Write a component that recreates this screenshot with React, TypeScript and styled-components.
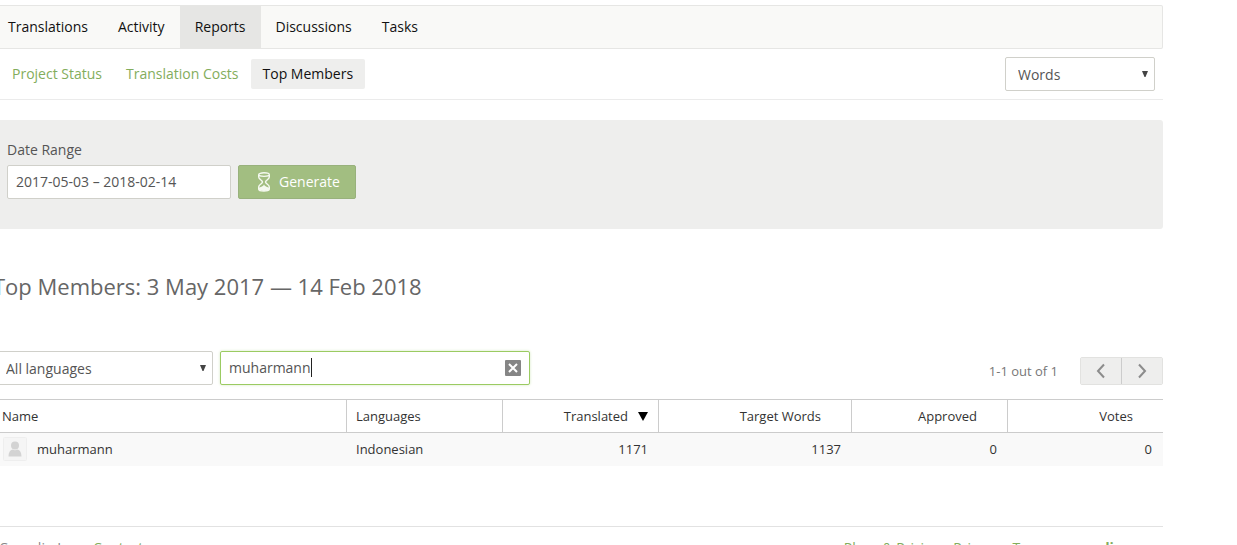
import styled, { createGlobalStyle } from "styled-components";

const GlobalStyle = createGlobalStyle`
  *, *::before, *::after { box-sizing: border-box; }
  body {
    margin: 0;
    background: #fff;
    color: #333;
    font: 14px/20px "Open Sans", sans-serif;
  }
  button, input, select { font: inherit; color: inherit; }
`;

const Page = styled.div`
  height: 100vh;
  overflow: hidden;
  padding: 5px 74px 0 0;
`;

const Content = styled.div`
  margin-left: -7px;
`;

const MainNav = styled.nav`
  display: flex;
  height: 44px;
  background: #f9f9f7;
  border: 1px solid #e6e6e4;
  border-left: 0;
  border-radius: 2px;
`;

const NavLink = styled.a<{ $active?: boolean }>`
  padding: 11px 15px;
  color: #111;
  text-decoration: none;
  background: ${(p) => (p.$active ? "#e6e6e4" : "transparent")};
`;

const SubBar = styled.div`
  display: flex;
  align-items: center;
  justify-content: space-between;
  height: 51px;
  padding: 0 8px 0 7px;
  border-bottom: 1px solid #ebebeb;
`;

const SubNav = styled.nav`
  display: flex;
`;

const SubLink = styled.a<{ $active?: boolean }>`
  padding: 5px 12px;
  border-radius: 2px;
  text-decoration: none;
  color: ${(p) => (p.$active ? "#111" : "#83ad5c")};
  background: ${(p) => (p.$active ? "#eeeeed" : "transparent")};
`;

const SelectBox = styled.div<{ $width: number }>`
  position: relative;
  width: ${(p) => p.$width}px;
  height: 34px;
`;

const Select = styled.select`
  appearance: none;
  width: 100%;
  height: 100%;
  padding: 2px 24px 0 12px;
  color: #555;
  background: #fff;
  border: 1px solid #d0d0ca;
  border-radius: 2px;
`;

const SelectArrow = styled.svg`
  position: absolute;
  right: 7px;
  top: 14px;
  pointer-events: none;
`;

const FilterPanel = styled.form`
  margin-top: 20px;
  padding: 20px 14px 30px;
  background: #eeeeed;
  border-radius: 3px;
`;

const Label = styled.label`
  display: block;
  margin-bottom: 5px;
  color: #555;
`;

const FieldRow = styled.div`
  display: flex;
  gap: 7px;
`;

const TextInput = styled.input`
  width: 224px;
  height: 34px;
  padding: 0 8px 2px;
  color: #555;
  background: #fff;
  border: 1px solid #d0d0ca;
  border-radius: 2px;
`;

const GenerateButton = styled.button`
  display: flex;
  align-items: center;
  justify-content: center;
  gap: 8px;
  width: 118px;
  height: 34px;
  padding: 0 0 0 3px;
  color: #fff;
  background: #a2be81;
  border: 1px solid #98b17c;
  border-radius: 2px;
`;

const Heading = styled.h1`
  margin: 41px 0 49px;
  color: #666;
  font-size: 22px;
  font-weight: 400;
  line-height: 32px;
`;

const Toolbar = styled.div`
  display: flex;
  gap: 7px;
  height: 34px;
`;

const SearchBox = styled.div`
  position: relative;
  width: 310px;
`;

const SearchInput = styled(TextInput)`
  width: 100%;
  padding-right: 32px;
  border-color: #9bcb62;
  box-shadow: 0 0 3px #d5e8c0;
  outline: none;
`;

const Caret = styled.span`
  position: absolute;
  left: 91px;
  top: 7px;
  width: 1px;
  height: 19px;
  background: #222;
`;

const ClearButton = styled.button`
  position: absolute;
  right: 9px;
  top: 9px;
  display: flex;
  width: 16px;
  height: 16px;
  padding: 0;
  background: #858585;
  border: 0;
  border-radius: 1px;
`;

const Pagination = styled.div`
  display: flex;
  align-items: center;
  align-self: flex-end;
  margin-left: auto;
  color: #777;
  font-size: 13px;
`;

const PageButtons = styled.div`
  display: flex;
  margin-left: 22px;
  border: 1px solid #e2e2e0;
  border-radius: 2px;
`;

const PageButton = styled.button`
  display: flex;
  align-items: center;
  justify-content: center;
  width: 40px;
  height: 26px;
  padding: 0;
  background: #eeeeed;
  border: 0;

  & + & {
    width: 41px;
    border-left: 1px solid #ccc;
  }
`;

const Table = styled.table`
  width: 100%;
  margin-top: 14px;
  table-layout: fixed;
  border-collapse: separate;
  border-spacing: 0;
  font-size: 13px;
  line-height: 20px;
`;

const HeadCell = styled.th<{ $number?: boolean }>`
  height: 34px;
  padding: ${(p) => (p.$number ? "0 30px 0 9px" : "0 9px")};
  text-align: ${(p) => (p.$number ? "right" : "left")};
  font-weight: 400;
  border: solid #ccc;
  border-width: 1px 1px 1px 0;
  position: relative;

  &:last-child { border-right: 0; }
`;

const SortArrow = styled.svg`
  position: absolute;
  right: 10px;
  top: 12px;
`;

const Cell = styled.td<{ $number?: boolean }>`
  height: 33px;
  padding: 0 11px 1px 9px;
  text-align: ${(p) => (p.$number ? "right" : "left")};
  background: #f9f9f9;
`;

const Member = styled.div`
  display: flex;
  align-items: center;
  gap: 10px;
  padding-left: 1px;
`;

const Footer = styled.footer`
  display: flex;
  justify-content: space-between;
  margin-top: 60px;
  padding: 11px 40px 20px 6px;
  color: #888;
  border-top: 1px solid #e2e2e2;
`;

const FooterGroup = styled.div`
  display: flex;
  gap: 13px;
`;

const FooterLink = styled.a<{ $brand?: boolean }>`
  color: #83ad5c;
  font-weight: ${(p) => (p.$brand ? 700 : 400)};
  text-decoration: none;
`;

const mainTabs = ["Translations", "Activity", "Reports", "Discussions", "Tasks"];
const reportTabs = ["Project Status", "Translation Costs", "Top Members"];
const columns = [
  { title: "Name", width: 354 },
  { title: "Languages", width: 156 },
  { title: "Translated", width: 156, number: true, sorted: true },
  { title: "Target Words", width: 193, number: true },
  { title: "Approved", width: 156, number: true },
  { title: "Votes", number: true },
];

function DropDown({ label, option, width }: { label: string; option: string; width: number }) {
  return (
    <SelectBox $width={width}>
      <Select aria-label={label} defaultValue={option}>
        <option>{option}</option>
      </Select>
      <SelectArrow width="6" height="6" viewBox="0 0 6 6" aria-hidden="true">
        <path d="M0 0h6L3.5 6h-1z" fill="#444" />
      </SelectArrow>
    </SelectBox>
  );
}

function Hourglass() {
  return (
    <svg width="14" height="20" viewBox="0 0 14 20" fill="none" stroke="#f5f9f0" strokeWidth="1.4" aria-hidden="true">
      <ellipse cx="7" cy="2.6" rx="5.3" ry="1.8" />
      <path d="M1.7 3v2c0 2.4 3.8 3.4 3.8 5s-3.8 2.600-3.800 5v2.200c0 2.400 10.600 2.400 10.600 0V15c0-2.400-3.800-3.400-3.800-5s3.800-2.600 3.800-5V3" />
      <path d="M2 16c1-1.500 4-1 5-3.500 1 2.500 4 2 5 3.500v1.700c-2 1.600-8 1.600-10 0z" fill="#f5f9f0" stroke="none" />
    </svg>
  );
}

function Avatar() {
  return (
    <svg width="24" height="24" viewBox="0 0 24 24" aria-hidden="true">
      <rect x=".5" y=".5" width="23" height="23" rx="1" fill="#f5f5f5" stroke="#eee" />
      <circle cx="12" cy="8.500" r="4" fill="#d3d3d3" />
      <path d="M5.500 19.500c0-4 1.500-6.500 4-7 1.500 1 3.500 1 5 0 2.500.5 4 3 4 7z" fill="#d3d3d3" />
    </svg>
  );
}

export default function App() {
  return (
    <Page>
      <GlobalStyle />
      <Content>
        <MainNav aria-label="Project">
          {mainTabs.map((tab) => (
            <NavLink key={tab} href="#" $active={tab === "Reports"}>{tab}</NavLink>
          ))}
        </MainNav>
        <SubBar>
          <SubNav aria-label="Reports">
            {reportTabs.map((tab) => (
              <SubLink key={tab} href="#" $active={tab === "Top Members"}>{tab}</SubLink>
            ))}
          </SubNav>
          <DropDown label="Unit" option="Words" width={150} />
        </SubBar>

        <FilterPanel>
          <Label htmlFor="range">Date Range</Label>
          <FieldRow>
            <TextInput id="range" defaultValue="2017-05-03 – 2018-02-14" />
            <GenerateButton type="button"><Hourglass />Generate</GenerateButton>
          </FieldRow>
        </FilterPanel>

        <Heading>Top Members: 3 May 2017 — 14 Feb 2018</Heading>

        <Toolbar>
          <DropDown label="Language" option="All languages" width={220} />
          <SearchBox>
            <SearchInput aria-label="Search members" defaultValue="muharmann" />
            <Caret />
            <ClearButton type="button" aria-label="Clear search">
              <svg width="16" height="16" viewBox="0 0 16 16" stroke="#fff" strokeWidth="2" aria-hidden="true">
                <path d="M4 4l8 8M12 4l-8 8" />
              </svg>
            </ClearButton>
          </SearchBox>
          <Pagination>
            1-1 out of 1
            <PageButtons>
              <PageButton type="button" aria-label="Previous page">
                <svg width="10" height="16" viewBox="0 0 10 16" fill="none" stroke="#8c8c8c" strokeWidth="2" aria-hidden="true">
                  <path d="M8 1.500L2 8l6 6.500" />
                </svg>
              </PageButton>
              <PageButton type="button" aria-label="Next page">
                <svg width="10" height="16" viewBox="0 0 10 16" fill="none" stroke="#8c8c8c" strokeWidth="2" aria-hidden="true">
                  <path d="M2 1.500L8 8l-6 6.500" />
                </svg>
              </PageButton>
            </PageButtons>
          </Pagination>
        </Toolbar>

        <Table>
          <colgroup>
            {columns.map((c) => <col key={c.title} width={c.width} />)}
          </colgroup>
          <thead>
            <tr>
              {columns.map((c) => (
                <HeadCell key={c.title} scope="col" $number={c.number}>
                  {c.title}
                  {c.sorted && (
                    <SortArrow width="10" height="9" viewBox="0 0 10 9" aria-hidden="true">
                      <path d="M0 0h10L5 9z" fill="#000" />
                    </SortArrow>
                  )}
                </HeadCell>
              ))}
            </tr>
          </thead>
          <tbody>
            <tr>
              <Cell><Member><Avatar />muharmann</Member></Cell>
              <Cell>Indonesian</Cell>
              <Cell $number>1171</Cell>
              <Cell $number>1137</Cell>
              <Cell $number>0</Cell>
              <Cell $number>0</Cell>
            </tr>
          </tbody>
        </Table>

        <Footer>
          <FooterGroup>
            <span>Crowdin Inc.</span>
            <FooterLink href="#">Contact</FooterLink>
          </FooterGroup>
          <FooterGroup>
            <FooterLink href="#">Plans &amp; Pricing</FooterLink>
            <FooterLink href="#">Privacy</FooterLink>
            <FooterLink href="#">Terms</FooterLink>
            <FooterLink href="#" $brand>crowdin</FooterLink>
          </FooterGroup>
        </Footer>
      </Content>
    </Page>
  );
}
